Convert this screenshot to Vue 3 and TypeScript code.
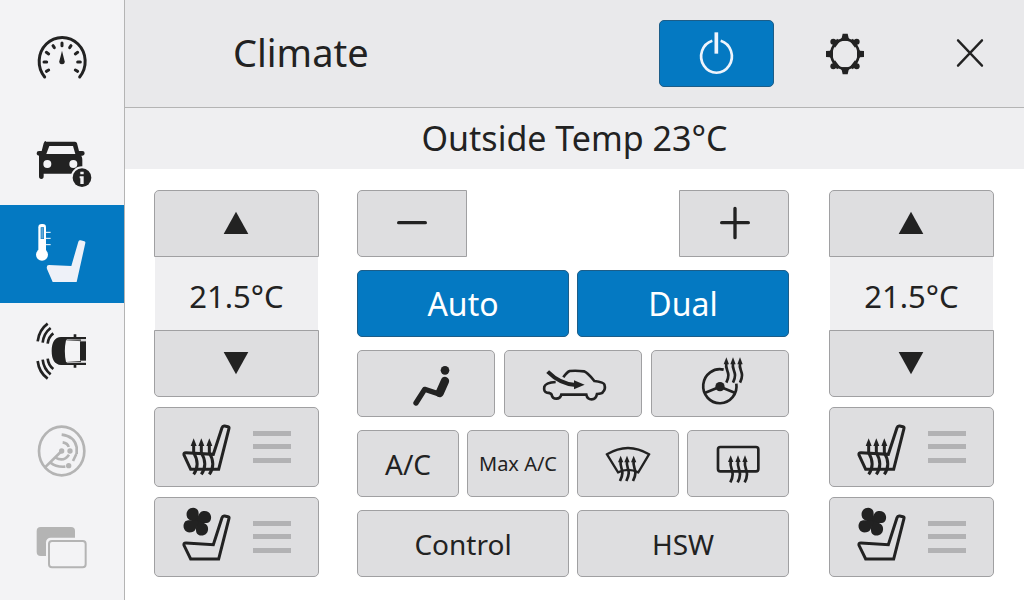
<script setup lang="ts">
import { reactive, ref } from 'vue'

interface Zone {
  id: string
  label: string
  temp: number
}

const zones = reactive<Zone[]>([
  { id: 'left', label: 'Driver', temp: 21.5 },
  { id: 'right', label: 'Passenger', temp: 21.5 },
])

const power = ref(true)
const auto = ref(true)
const dual = ref(true)

const seatArrows = [131, 154, 178]
const frontArrows = [152, 171, 191]
const rearArrows = [482, 504, 525]
const wheelArrows = [469, 489, 510]
const blades = [0, 90, 180, 270]
</script>

<template>
  <div class="screen">
    <nav class="sidebar" aria-label="Main">
      <button class="nav" type="button" aria-label="Dashboard">
        <svg viewBox="0 -33 372 294" fill="none" stroke="#222" stroke-linecap="round">
          <path d="M134 171A69 72 0 1 1 239 171" stroke-width="9" />
          <path
            d="M186 69v8M159 77l4 6M213 77l-4 6M139 97l7 5M233 97l-7 5M132 126h8M233 126h8M139 154l7-4M233 154l-7-4"
            stroke-width="9"
          />
          <path d="M186 92l8 32q1 9-8 9t-8-9z" fill="#222" stroke="none" />
        </svg>
      </button>
      <button class="nav" type="button" aria-label="Vehicle info">
        <svg viewBox="0 261 372 294" fill="#222">
          <path
            d="M138 365h87q5 0 6 5l6 23h10q7 0 7 7t-7 7h-3q3 6 3 13v41H131v8q0 8-7 8t-7-8v-62h1q-8 0-8-7t7-7h8l6-23q2-7 7-7z"
          />
          <path d="M148 378h71l7 24h-87z" fill="#f3f3f5" />
          <circle cx="142" cy="432" r="12" fill="#f3f3f5" />
          <circle cx="220" cy="432" r="12" fill="#f3f3f5" />
          <circle cx="246" cy="473" r="34" fill="#f3f3f5" />
          <circle cx="246" cy="473" r="28" />
          <path d="M241 455h10v8h-10zM239 469h12v23h-10v-17h-2z" fill="#f3f3f5" />
        </svg>
      </button>
      <button class="nav active" type="button" aria-label="Climate" aria-current="page">
        <svg viewBox="0 15 372 294" fill="#fff">
          <rect x="115" y="72" width="23" height="92" rx="10" />
          <circle cx="126" cy="164" r="18" />
          <rect x="123" y="83" width="8" height="33" fill="#5fa8d8" stroke="#0479c2" stroke-width="2" />
          <path d="M138 97h14M138 115h14M138 134h14" stroke="#fff" stroke-width="3" />
          <path
            d="M235 125q2-5 7-4l11 3q4 1 3 5l-26 117h-72l-17-39q-3-12 6-12l67 3z"
            fill="#eef1f8"
          />
        </svg>
      </button>
      <button class="nav" type="button" aria-label="Parking sensors">
        <svg viewBox="0 309 372 294" fill="none" stroke="#222">
          <path
            d="M143 371Q117 390 113 424M152 384Q131 400 128 428M160 400Q145 411 143 431M143 536Q117 517 113 483M152 523Q131 507 128 479M160 507Q145 496 143 476"
            stroke-width="8"
          />
          <path
            d="M258 411h-29v-8h-8v8h-38q-28 2-28 42t28 42h38v8h8v-8h29v-6h-15v-72h15z"
            fill="#222"
            stroke="none"
          />
          <path d="M198 421l47 3-5 12v35l5 12-47 3q-7-32 0-65z" fill="#f3f3f5" stroke="none" />
          <path d="M240 424h18v58h-18z" fill="#222" stroke="none" />
          <path d="M200 419l58 1M200 488l58-1" stroke="#b8b8ba" stroke-width="3" />
        </svg>
      </button>
      <button class="nav" type="button" aria-label="Radar">
        <svg viewBox="0 33 372 294" fill="none" stroke="#b4b4b4" stroke-width="8">
          <ellipse cx="185" cy="183" rx="68" ry="73" />
          <path
            d="M185 183l-50 49M185 134q38 4 45 38v20M229 192l-10 21M188 157q15 2 18 14M166 202q24 16 41-8M153 219q15 13 43 11"
          />
          <g fill="#b4b4b4" stroke="none">
            <circle cx="185" cy="183" r="8" />
            <circle cx="210" cy="183" r="8" />
            <circle cx="206" cy="227" r="8" />
          </g>
        </svg>
      </button>
      <button class="nav" type="button" aria-label="Windows">
        <svg viewBox="0 327 372 294" fill="#b4b4b4">
          <rect x="110" y="411" width="115" height="87" rx="12" />
          <rect x="138" y="443" width="128" height="98" rx="14" fill="#f3f3f5" />
          <rect
            x="147"
            y="453"
            width="110"
            height="79"
            rx="9"
            fill="#f3f3f5"
            stroke="#b4b4b4"
            stroke-width="6"
          />
        </svg>
      </button>
    </nav>

    <main class="main">
      <header class="header">
        <h1>Climate</h1>
        <button
          class="btn power"
          :class="{ on: power }"
          type="button"
          aria-label="Power"
          :aria-pressed="power"
          @click="power = !power"
        >
          <svg width="113" height="65" viewBox="60 63 339 195" fill="none" stroke="#eef4fc" stroke-width="8">
            <path d="M217 122A46 49 0 1 0 242 122" />
            <path d="M229 97v64" stroke-width="11" />
          </svg>
        </button>
        <button class="bare settings" type="button" aria-label="Settings">
          <svg width="142" height="67" viewBox="402 60 426 201" fill="#222">
            <ellipse cx="615" cy="162" rx="41" ry="44" fill="none" stroke="#222" stroke-width="8" />
            <path
              d="M608 101h15l3 13 6 8h-34l7-8zM608 223h15l3-13 6-8h-34l7 8zM558 153l12-1 9-8v36l-9-8-12-1zM672 153l-12-1-9-8v36l9-8 12-1z"
            />
            <circle cx="580" cy="125" r="9" />
            <circle cx="650" cy="125" r="9" />
            <circle cx="580" cy="199" r="9" />
            <circle cx="650" cy="199" r="9" />
            <path d="M578 135l13-19 10 6-16 21zM652 135l-13-19-10 6 16 21zM578 189l13 19 10-6-16-21zM652 189l-13 19-10-6 16-21z" />
          </svg>
        </button>
        <button class="bare close" type="button" aria-label="Close">
          <svg width="108" height="67" viewBox="828 60 324 201" stroke="#222" stroke-width="7" stroke-linecap="round">
            <path d="M954 121l72 76M1026 121l-72 76" />
          </svg>
        </button>
      </header>

      <p class="outside">Outside Temp 23°C</p>

      <div class="panel">
        <section v-for="zone in zones" :key="zone.id" class="zone" :class="zone.id" :aria-label="zone.label">
          <div class="stepper">
            <button class="btn top" type="button" aria-label="Warmer" @click="zone.temp += 0.5">
              <svg width="163" height="65" viewBox="15 33 489 195" fill="#222">
                <path d="M258 95l37 67h-74z" />
              </svg>
            </button>
            <output class="value">{{ zone.temp.toFixed(1) }}°C</output>
            <button class="btn bottom" type="button" aria-label="Cooler" @click="zone.temp -= 0.5">
              <svg width="163" height="65" viewBox="15 453 489 195" fill="#222">
                <path d="M258 583l37-67h-74z" />
              </svg>
            </button>
          </div>
          <button class="btn seat" type="button" aria-label="Seat heating">
            <svg width="163" height="78" viewBox="15 24 489 234" fill="none" stroke="#222" stroke-width="9">
              <path d="M224 78l10 2q4 1 3 5l-31 123h-84l-20-43q-2-7 6-7l82 5 26-80q2-6 8-5z" />
              <g v-for="x in seatArrows" :key="x">
                <path :d="`M${x} 130v28c13 22 14 45 0 65`" />
                <path :d="`M${x} 115l9 23h-18z`" fill="#222" stroke="none" />
              </g>
              <path d="M309 93h114v15h-114zM309 132h114v15h-114zM309 174h114v15h-114z" fill="#b2b2b4" stroke="none" />
            </svg>
          </button>
          <button class="btn seat" type="button" aria-label="Seat ventilation">
            <svg width="163" height="78" viewBox="15 294 489 234" fill="none" stroke="#222" stroke-width="9">
              <path d="M224 348l10 2q4 1 3 5l-31 122h-84l-20-41q-2-7 6-7l82 5 26-81q2-6 8-5z" />
              <path
                v-for="angle in blades"
                :key="angle"
                d="M138 370C131 361 112 363 110 347C107 327 127 319 139 326C151 333 143 349 147 362z"
                :transform="`rotate(${angle} 142 365)`"
                fill="#222"
                stroke="none"
              />
              <path d="M309 363h114v15h-114zM309 402h114v15h-114zM309 444h114v15h-114z" fill="#b2b2b4" stroke="none" />
            </svg>
          </button>
        </section>

        <section class="controls" aria-label="Fan and air">
          <div class="row fan">
            <button class="btn fan-down" type="button" aria-label="Fan slower">
              <svg width="108" height="65" viewBox="24 33 324 195" stroke="#222" stroke-width="10" stroke-linecap="round">
                <path d="M146 128h80" />
              </svg>
            </button>
            <button class="btn fan-up" type="button" aria-label="Fan faster">
              <svg width="108" height="65" viewBox="990 33 324 195" stroke="#222" stroke-width="10" stroke-linecap="round">
                <path d="M1115 128h80M1155 85v88" />
              </svg>
            </button>
          </div>
          <div class="row">
            <button class="btn" :class="{ on: auto }" type="button" :aria-pressed="auto" @click="auto = !auto">
              Auto
            </button>
            <button class="btn" :class="{ on: dual }" type="button" :aria-pressed="dual" @click="dual = !dual">
              Dual
            </button>
          </div>
          <div class="row wide">
            <button class="btn" type="button" aria-label="Air direction">
              <svg width="120" height="65" viewBox="48 33 360 195" fill="none" stroke="#222" stroke-linecap="round" stroke-linejoin="round">
                <circle cx="285" cy="91" r="13" fill="#222" stroke="none" />
                <path d="M285 123l-16 36" stroke-width="25" />
                <path d="M267 162l-43-14-26 41" stroke-width="16" />
              </svg>
            </button>
            <button class="btn" type="button" aria-label="Recirculation">
              <svg width="120" height="65" viewBox="489 33 360 195" fill="none" stroke="#222" stroke-width="8">
                <path
                  d="M617 126q-30 2-34 14-3 16 8 18 12 1 14 6 2 12 14 12t15-12h75q3 14 16 14t16-16q15-1 17-5 10-9 5-24-2-6-30-10-20-25-31-29-23-3-43-1-8 3-19 19"
                />
                <path d="M593 95q38 38 84 40" stroke-width="12" />
                <path d="M672 121l32 13-32 14z" fill="#222" stroke="none" />
              </svg>
            </button>
            <button class="btn" type="button" aria-label="Steering wheel heating">
              <svg width="120" height="65" viewBox="270 33 360 195" fill="none" stroke="#222" stroke-width="8">
                <path d="M461 89A50 51 0 1 0 499 131" />
                <circle cx="450" cy="140" r="14" fill="#222" stroke="none" />
                <path d="M450 140l-46 19M450 140l46 19" />
                <g v-for="x in wheelArrows" :key="x">
                  <path :d="`M${x} 70c-5 21 16 26 0 58`" stroke-width="8" />
                  <path :d="`M${x} 52l8 21h-16z`" fill="#222" stroke="none" />
                </g>
              </svg>
            </button>
          </div>
          <div class="row">
            <button class="btn medium" type="button">A/C</button>
            <button class="btn small" type="button">Max A/C</button>
            <button class="btn" type="button" aria-label="Front defrost">
              <svg width="100" height="65" viewBox="24 18 300 195" fill="none" stroke="#222" stroke-width="8">
                <path d="M111 88q63-38 126 0l-32 54q-31-15-61 0z" stroke-width="7" />
                <g v-for="x in frontArrows" :key="x">
                  <path :d="`M${x} 108c-4 24 15 26-2 60`" />
                  <path :d="`M${x} 92l8 20h-16z`" fill="#222" stroke="none" />
                </g>
              </svg>
            </button>
            <button class="btn" type="button" aria-label="Rear defrost">
              <svg width="100" height="65" viewBox="354 18 300 195" fill="none" stroke="#222" stroke-width="8">
                <rect x="444" y="66" width="121" height="73" rx="7" />
                <g v-for="x in rearArrows" :key="x">
                  <path :d="`M${x} 108c-4 26 16 30-1 64`" />
                  <path :d="`M${x} 91l8 20h-16z`" fill="#222" stroke="none" />
                </g>
              </svg>
            </button>
          </div>
          <div class="row">
            <button class="btn medium" type="button">Control</button>
            <button class="btn medium" type="button">HSW</button>
          </div>
        </section>
      </div>
    </main>
  </div>
</template>

<style>
body {
  margin: 0;
  background: #fff;
}
</style>

<style scoped>
.screen {
  display: grid;
  grid-template-columns: 125px 1fr;
  min-height: 100vh;
  font-family: "Noto Sans", "Open Sans", sans-serif;
  color: #222;
}

.sidebar {
  display: flex;
  flex-direction: column;
  box-sizing: border-box;
  padding-top: 9px;
  background: #f3f3f5;
  border-right: 1px solid #b4b4b4;
}

button {
  padding: 0;
  font: inherit;
  color: inherit;
  cursor: pointer;
}

svg {
  display: block;
  flex: none;
}

.nav {
  height: 98px;
  background: none;
  border: 0;
}

.nav svg {
  width: 124px;
  height: 98px;
}

.nav.active {
  background: #0479c2;
}

.header {
  display: flex;
  align-items: center;
  padding: 20px 0;
  background: #e9e9eb;
  border-bottom: 1px solid #b4b4b4;
}

h1 {
  flex: 1;
  margin: 0;
  padding: 0 0 4px 108px;
  font-size: 38px;
  font-weight: 400;
  line-height: 48px;
}

.bare {
  background: none;
  border: 0;
}

.outside {
  margin: 0;
  padding: 6px 0 7px;
  background: #efeff1;
  font-size: 34px;
  line-height: 48px;
  text-align: center;
}

.btn {
  display: flex;
  align-items: center;
  justify-content: center;
  box-sizing: border-box;
  min-width: 0;
  min-height: 67px;
  background: #dedee0;
  border: 1px solid #a0a0a2;
  border-radius: 5px;
  font-size: 32px;
  line-height: 40px;
  white-space: nowrap;
}

.btn.on {
  background: #0479c2;
  border-color: #1c5d88;
  color: #fff;
}

.btn.medium {
  font-size: 28px;
}

.btn.small {
  font-size: 20px;
}

.panel {
  display: grid;
  grid-template-columns: 165px 1fr 165px;
  column-gap: 38px;
  padding: 21px 30px 23px 29px;
}

.zone {
  grid-row: 1;
  display: flex;
  flex-direction: column;
  gap: 10px;
}

.zone.left {
  grid-column: 1;
}

.zone.right {
  grid-column: 3;
}

.stepper {
  display: flex;
  flex-direction: column;
}

.top {
  border-radius: 5px 5px 0 0;
}

.bottom {
  border-radius: 0 0 5px 5px;
}

.value {
  margin: 0 1px;
  padding: 19px 0 14px;
  background: #efeff1;
  font-size: 31px;
  line-height: 40px;
  text-align: center;
}

.seat {
  min-height: 80px;
}

.controls {
  grid-row: 1;
  grid-column: 2;
  display: flex;
  flex-direction: column;
  gap: 13px;
  padding-right: 2px;
}

.row {
  display: flex;
  gap: 8px;
}

.row.wide {
  gap: 9px;
}

.row .btn {
  flex: 1 1 0;
}

.row.fan {
  justify-content: space-between;
}

.row.fan .btn {
  flex: 0 0 110px;
}

.row .fan-down {
  border-radius: 5px 0 0 5px;
}

.row .fan-up {
  border-radius: 0 5px 5px 0;
}
</style>
